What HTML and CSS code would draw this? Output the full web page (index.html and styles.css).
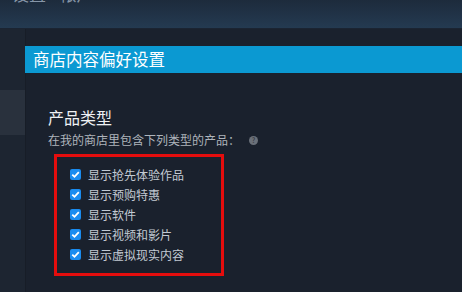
FILE: index.html
```html
<!DOCTYPE html>
<html lang="zh-CN">
  <head>
    <meta charset="UTF-8" />
    <title>商店内容偏好设置</title>
    <link rel="stylesheet" href="styles.css">
  </head>
  <body>
    <header class="topbar">
      <span class="topbar-title">设置 - 帐户</span>
    </header>
    <div class="layout">
      <nav class="sidebar">
        <div class="sidebar-item active"></div>
      </nav>
      <main class="content">
        <div class="page-title">商店内容偏好设置</div>
        <section class="section">
          <h2>产品类型</h2>
          <p class="desc">
            在我的商店里包含下列类型的产品：
            <span class="help">?</span>
          </p>
          <ul class="options">
            <li><span class="check"><svg viewBox="0 0 11 11"><path d="M2.3 5.6 4.5 7.8 8.8 3.2" /></svg></span>显示抢先体验作品</li>
            <li><span class="check"><svg viewBox="0 0 11 11"><path d="M2.3 5.6 4.5 7.8 8.8 3.2" /></svg></span>显示预购特惠</li>
            <li><span class="check"><svg viewBox="0 0 11 11"><path d="M2.3 5.6 4.5 7.8 8.8 3.2" /></svg></span>显示软件</li>
            <li><span class="check"><svg viewBox="0 0 11 11"><path d="M2.3 5.6 4.5 7.8 8.8 3.2" /></svg></span>显示视频和影片</li>
            <li><span class="check"><svg viewBox="0 0 11 11"><path d="M2.3 5.6 4.5 7.8 8.8 3.2" /></svg></span>显示虚拟现实内容</li>
          </ul>
        </section>
      </main>
    </div>
  </body>
</html>
```

FILE: styles.css
```css
body {
  margin: 0;
  background-color: #1a212d;
  font-family: "Noto Sans CJK SC", "Noto Sans", sans-serif;
  color: #c6ccd4;
  height: 100vh;
  overflow: hidden;
  display: flex;
  flex-direction: column;
}

/* only the lower edge of the window title shows */
.topbar {
  height: 28px;
  flex-shrink: 0;
  background: linear-gradient(to bottom, #1d2b3c, #243a51);
  border-bottom: 1px solid #1b2432;
  overflow: hidden;
  padding-left: 12px;
}

.topbar-title {
  display: block;
  margin-top: -16px;
  font-size: 17px;
  line-height: 20px;
  color: #8796a8;
}

.layout {
  flex-grow: 1;
  display: flex;
}

.sidebar {
  width: 25px;
  flex-shrink: 0;
  background-color: #1d2531;
  border-right: 1px solid #171d27;
}

.sidebar-item.active {
  margin-top: 61px;
  height: 45px;
  background-color: #29313d;
}

.content {
  flex-grow: 1;
  padding-top: 17px;
}

.page-title {
  margin-left: -1px;
  height: 27px;
  line-height: 27px;
  padding-left: 8px;
  background-color: #0b99d2;
  color: #ffffff;
  font-size: 16.5px;
}

.section {
  padding: 33px 0 0 22px;
}

h2 {
  margin: 0;
  font-size: 16px;
  font-weight: normal;
  line-height: 22px;
  color: #eef1f4;
}

.desc {
  margin: 3px 0 0;
  font-size: 12px;
  line-height: 18px;
  color: #aeb4bb;
  display: flex;
  align-items: center;
}

.help {
  display: inline-flex;
  align-items: center;
  justify-content: center;
  width: 9px;
  height: 9px;
  margin-left: 9px;
  border-radius: 50%;
  background-color: #6a7079;
  color: #3a3f47;
  font-size: 7px;
  font-weight: bold;
  line-height: 1;
}

.options {
  list-style: none;
  margin: 5px 0 0 6px;
  padding: 7px 0 10px 13px;
  box-sizing: border-box;
  width: 170px;
  height: 122px;
  border: 3px solid #e50d0d;
}

.options li {
  display: flex;
  align-items: center;
  height: 20px;
  font-size: 12px;
  color: #c3cad3;
}

.check {
  width: 11px;
  height: 11px;
  margin-right: 7px;
  border-radius: 2px;
  background-color: #1a8cf0;
  flex-shrink: 0;
}

.check svg {
  display: block;
  width: 11px;
  height: 11px;
}

.check path {
  fill: none;
  stroke: #ffffff;
  stroke-width: 1.8;
}
```
